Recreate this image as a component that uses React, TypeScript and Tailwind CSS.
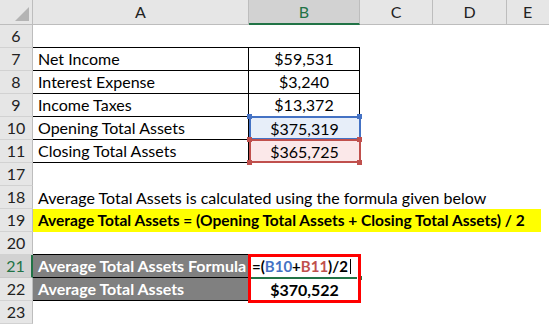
import React from "react";

const HDR = "bg-[#e6e6e6]";

function RowHead({ n, sel }: { n: number; sel?: boolean }) {
  return (
    <div
      className={
        "w-[33px] shrink-0 h-full flex items-center justify-center " +
        (sel
          ? "bg-[#d2d2d2] text-[#217346] border-r-2 border-r-[#217346] border-b border-b-[#c8c8c8]"
          : HDR + " text-[#222] border-r border-r-[#bdbdbd] border-b border-b-[#d2d2d2]")
      }
    >
      {n}
    </div>
  );
}

function Row({ n, sel, children }: { n: number; sel?: boolean; children?: React.ReactNode }) {
  return (
    <div className="flex h-[23px]">
      <RowHead n={n} sel={sel} />
      {children}
    </div>
  );
}

function TRow({ n, label, value, bCls }: { n: number; label: string; value: string; bCls: string }) {
  return (
    <Row n={n}>
      <div className="w-[216px] shrink-0 h-full border-r border-b border-black pl-[5px] flex items-center">{label}</div>
      <div className={"w-[111px] shrink-0 h-full flex items-center justify-center " + bCls}>{value}</div>
    </Row>
  );
}

export default function App() {
  return (
    <div className="relative w-[549px] h-[324px] overflow-hidden bg-white text-[16px] leading-none text-black font-['Lato','Open_Sans',sans-serif]">
      {/* column header */}
      <div className="flex h-[25px]">
        <div className={"relative w-[33px] shrink-0 h-full border-r border-b border-[#bdbdbd] " + HDR}>
          <svg className="absolute right-[3px] bottom-[3px]" width="14" height="14" viewBox="0 0 14 14">
            <polygon points="14,0 14,14 0,14" fill="#b4b4b4" />
          </svg>
        </div>
        <div className={"w-[216px] shrink-0 h-full flex items-center justify-center border-r border-b border-[#bdbdbd] text-[#222] " + HDR}>A</div>
        <div className="w-[111px] shrink-0 h-full flex items-center justify-center bg-[#d2d2d2] border-r border-r-[#bdbdbd] border-b-2 border-b-[#217346] text-[#217346]">B</div>
        <div className={"w-[73px] shrink-0 h-full flex items-center justify-center border-r border-b border-[#bdbdbd] text-[#222] " + HDR}>C</div>
        <div className={"w-[74px] shrink-0 h-full flex items-center justify-center border-r border-b border-[#bdbdbd] text-[#222] " + HDR}>D</div>
        <div className={"w-[60px] shrink-0 h-full flex items-center pl-[16px] border-b border-[#bdbdbd] text-[#222] " + HDR}>E</div>
      </div>

      <Row n={6}>
        <div className="w-[216px] shrink-0 h-full border-b border-black" />
        <div className="w-[111px] shrink-0 h-full border-b border-black" />
      </Row>
      <TRow n={7} label="Net Income" value="$59,531" bCls="border-r border-b border-black" />
      <TRow n={8} label="Interest Expense" value="$3,240" bCls="border-r border-b border-black" />
      <TRow n={9} label="Income Taxes" value="$13,372" bCls="border-r border-b border-black" />
      <TRow n={10} label="Opening Total Assets" value="$375,319" bCls="bg-[#e7eef9]" />
      <TRow n={11} label="Closing Total Assets" value="$365,725" bCls="bg-[#fbe8e9]" />
      <Row n={17} />
      <Row n={18}>
        <div className="pl-[5px] flex items-center whitespace-nowrap">
          Average Total Assets is calculated using the formula given below
        </div>
      </Row>
      <Row n={19}>
        <div className="w-[508px] shrink-0 h-full bg-[#ffff00] pl-[5px] flex items-center whitespace-nowrap font-bold text-[15.5px]">
          Average Total Assets = (Opening Total Assets + Closing Total Assets) / 2
        </div>
      </Row>
      <Row n={20}>
        <div className="w-[216px] shrink-0 h-full border-b border-black" />
      </Row>
      <Row n={21} sel>
        <div className="w-[216px] shrink-0 h-full bg-[#808080] border-b border-black pl-[5px] flex items-center text-white font-bold whitespace-nowrap">
          Average Total Assets Formula
        </div>
        <div className="relative w-[111px] shrink-0 h-full pl-[3px] flex items-center font-bold whitespace-nowrap text-[15px]">
          <span>=(</span>
          <span className="text-[#4472c4]">B10</span>
          <span>+</span>
          <span className="text-[#c0504d]">B11</span>
          <span>)/2</span>
          <span className="ml-[2px] w-px h-[15px] bg-black" />
        </div>
      </Row>
      <Row n={22}>
        <div className="w-[216px] shrink-0 h-full bg-[#808080] border-b border-black pl-[5px] flex items-center text-white font-bold whitespace-nowrap">
          Average Total Assets
        </div>
        <div className="w-[111px] shrink-0 h-full flex items-center justify-center font-bold">$370,522</div>
      </Row>
      <Row n={23} />

      {/* range highlight overlays */}
      <div className="absolute left-[249px] top-[116px] w-[112px] h-[24px] border-2 border-[#4472c4]" />
      <div className="absolute left-[249px] top-[139px] w-[112px] h-[24px] border-2 border-[#c0504d]" />
      <div className="absolute left-[247px] top-[114px] w-[5px] h-[5px] bg-[#4472c4]" />
      <div className="absolute left-[357px] top-[114px] w-[5px] h-[5px] bg-[#4472c4]" />
      <div className="absolute left-[247px] top-[137px] w-[5px] h-[5px] bg-[#c0504d]" />
      <div className="absolute left-[357px] top-[137px] w-[5px] h-[5px] bg-[#c0504d]" />
      <div className="absolute left-[247px] top-[160px] w-[5px] h-[5px] bg-[#c0504d]" />
      <div className="absolute left-[357px] top-[160px] w-[5px] h-[5px] bg-[#c0504d]" />

      {/* selected cell underline + red box */}
      <div className="absolute left-[250px] top-[277px] w-[107px] h-[2px] bg-[#217346]" />
      <div className="absolute left-[358px] top-[276px] w-[4px] h-[4px] bg-[#217346]" />
      <div className="absolute left-[248px] top-[254px] w-[113px] h-[49px] border-[3px] border-[#ff0000]" />
    </div>
  );
}
